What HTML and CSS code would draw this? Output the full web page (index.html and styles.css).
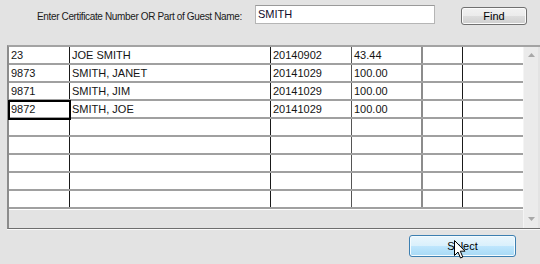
FILE: index.html
```html
<!DOCTYPE html>
<html>
<head>
<meta charset="utf-8">
<link rel="stylesheet" href="styles.css">
</head>
<body>
<div class="win">
  <div class="top">
    <label class="lbl">Enter Certificate Number OR Part of Guest Name:</label>
    <div class="input">SMITH</div>
    <div class="btn find">Find</div>
  </div>
  <div class="grid">
    <div class="body">
      <div class="rows">
        <div class="row"><div class="c c1">23</div><div class="c c2">JOE SMITH</div><div class="c c3">20140902</div><div class="c c4">43.44</div><div class="c c5"></div><div class="c c6"></div></div>
        <div class="row"><div class="c c1">9873</div><div class="c c2">SMITH, JANET</div><div class="c c3">20141029</div><div class="c c4">100.00</div><div class="c c5"></div><div class="c c6"></div></div>
        <div class="row"><div class="c c1">9871</div><div class="c c2">SMITH, JIM</div><div class="c c3">20141029</div><div class="c c4">100.00</div><div class="c c5"></div><div class="c c6"></div></div>
        <div class="row"><div class="c c1 sel">9872</div><div class="c c2">SMITH, JOE</div><div class="c c3">20141029</div><div class="c c4">100.00</div><div class="c c5"></div><div class="c c6"></div></div>
        <div class="row"><div class="c c1"></div><div class="c c2"></div><div class="c c3"></div><div class="c c4"></div><div class="c c5"></div><div class="c c6"></div></div>
        <div class="row"><div class="c c1"></div><div class="c c2"></div><div class="c c3"></div><div class="c c4"></div><div class="c c5"></div><div class="c c6"></div></div>
        <div class="row"><div class="c c1"></div><div class="c c2"></div><div class="c c3"></div><div class="c c4"></div><div class="c c5"></div><div class="c c6"></div></div>
        <div class="row"><div class="c c1"></div><div class="c c2"></div><div class="c c3"></div><div class="c c4"></div><div class="c c5"></div><div class="c c6"></div></div>
        <div class="row"><div class="c c1"></div><div class="c c2"></div><div class="c c3"></div><div class="c c4"></div><div class="c c5"></div><div class="c c6"></div></div>
        <div class="filler"></div>
      </div>
      <div class="vscroll">
        <svg class="arr" width="7" height="4" viewBox="0 0 7 4"><path d="M0 4 L3.5 0 L7 4 Z" fill="#a8a8a8"/></svg>
        <svg class="arr" width="7" height="4" viewBox="0 0 7 4"><path d="M0 0 L3.5 4 L7 0 Z" fill="#a8a8a8"/></svg>
      </div>
    </div>
  </div>
  <div class="bottom">
    <div class="btn select">Select</div>
    <svg class="cursor" width="12" height="19" viewBox="0 0 12 19"><path d="M0.5 0.5 L0.5 15.5 L4 12 L6.5 18 L8.8 17 L6.3 11.2 L11 11.2 Z" fill="#fff" stroke="#000" stroke-width="1"/></svg>
  </div>
</div>
</body>
</html>
```
FILE: styles.css
```css
html, body {
  margin: 0;
  padding: 0;
}
body {
  background: #e3e3e3;
  font-family: "Liberation Sans", Arial, sans-serif;
  font-size: 11px;
  color: #111;
}
.win {
  width: 540px;
  height: 264px;
  overflow: hidden;
  position: relative;
}
.top {
  display: flex;
  align-items: flex-start;
  height: 45px;
  padding-left: 37px;
}
.lbl {
  width: 218px;
  margin-top: 11px;
  font-size: 10px;
  letter-spacing: -0.36px;
  line-height: 12px;
  white-space: nowrap;
  color: #1a1a1a;
}
.input {
  box-sizing: border-box;
  width: 180px;
  height: 19px;
  margin-top: 5px;
  background: #fff;
  border: 1px solid #b5b5b5;
  border-top-color: #9a9a9a;
  padding: 2px 2px;
  line-height: 13px;
  color: #0f0a2a;
}
.btn {
  box-sizing: border-box;
  display: flex;
  align-items: center;
  justify-content: center;
  border-radius: 3px;
  color: #000;
}
.find {
  width: 66px;
  height: 18px;
  margin-top: 7px;
  margin-left: 26px;
  border: 1px solid #707070;
  background: linear-gradient(#f2f2f2 0%, #ebebeb 50%, #dddddd 51%, #cfcfcf 100%);
  box-shadow: inset 0 0 0 1px #fbfbfb;
}
.grid {
  box-sizing: border-box;
  margin-left: 7px;
  width: 533px;
  height: 184px;
  border-top: 2px solid #a3a3a3;
  border-left: 2px solid #8c8c8c;
  border-bottom: 1px solid #6e6e6e;
  box-shadow: 0 1px 0 #fafafa;
}
.body {
  display: flex;
  height: 181px;
}
.rows {
  width: 514px;
  display: flex;
  flex-direction: column;
}
.row {
  display: grid;
  grid-template-columns: 61px 201px 81px 71px 40px 60px;
  height: 18px;
  box-sizing: border-box;
  border-bottom: 2px solid #a0a0a0;
  background: #fff;
}
.c {
  box-sizing: border-box;
  padding-left: 2px;
  line-height: 16px;
  border-right: 1px solid #1a1a1a;
  white-space: nowrap;
  overflow: hidden;
  color: #141414;
}
.c3 { border-right-color: #555; }
.c4 { border-right: 2px solid #8c8c8c; }
.c6 { border-right: none; }
.c1.sel {
  outline: 2px solid #000;
  outline-offset: -1px;
  position: relative;
  z-index: 1;
  margin-bottom: -2px;
  height: 18px;
}
.filler {
  flex: 1;
  border-top: 1px solid #fff;
  background: #e3e3e3;
}
.vscroll {
  width: 15px;
  background: #ebebeb;
  border-left: 1px solid #f4f4f4;
  display: flex;
  flex-direction: column;
  justify-content: space-between;
  align-items: center;
  padding: 6px 0 7px 0;
  box-sizing: border-box;
}
.arr {
  display: block;
}
.bottom {
  position: relative;
  padding-left: 409px;
  padding-top: 6px;
}
.select {
  width: 107px;
  height: 22px;
  border: 1px solid #3c7fb1;
  background: linear-gradient(#eaf6fd 0%, #d9f0fc 50%, #bee6fd 51%, #a7d9f5 100%);
  box-shadow: inset 0 0 0 1px #f4fbfe;
}
.cursor {
  position: absolute;
  left: 454px;
  top: 11px;
}
```
